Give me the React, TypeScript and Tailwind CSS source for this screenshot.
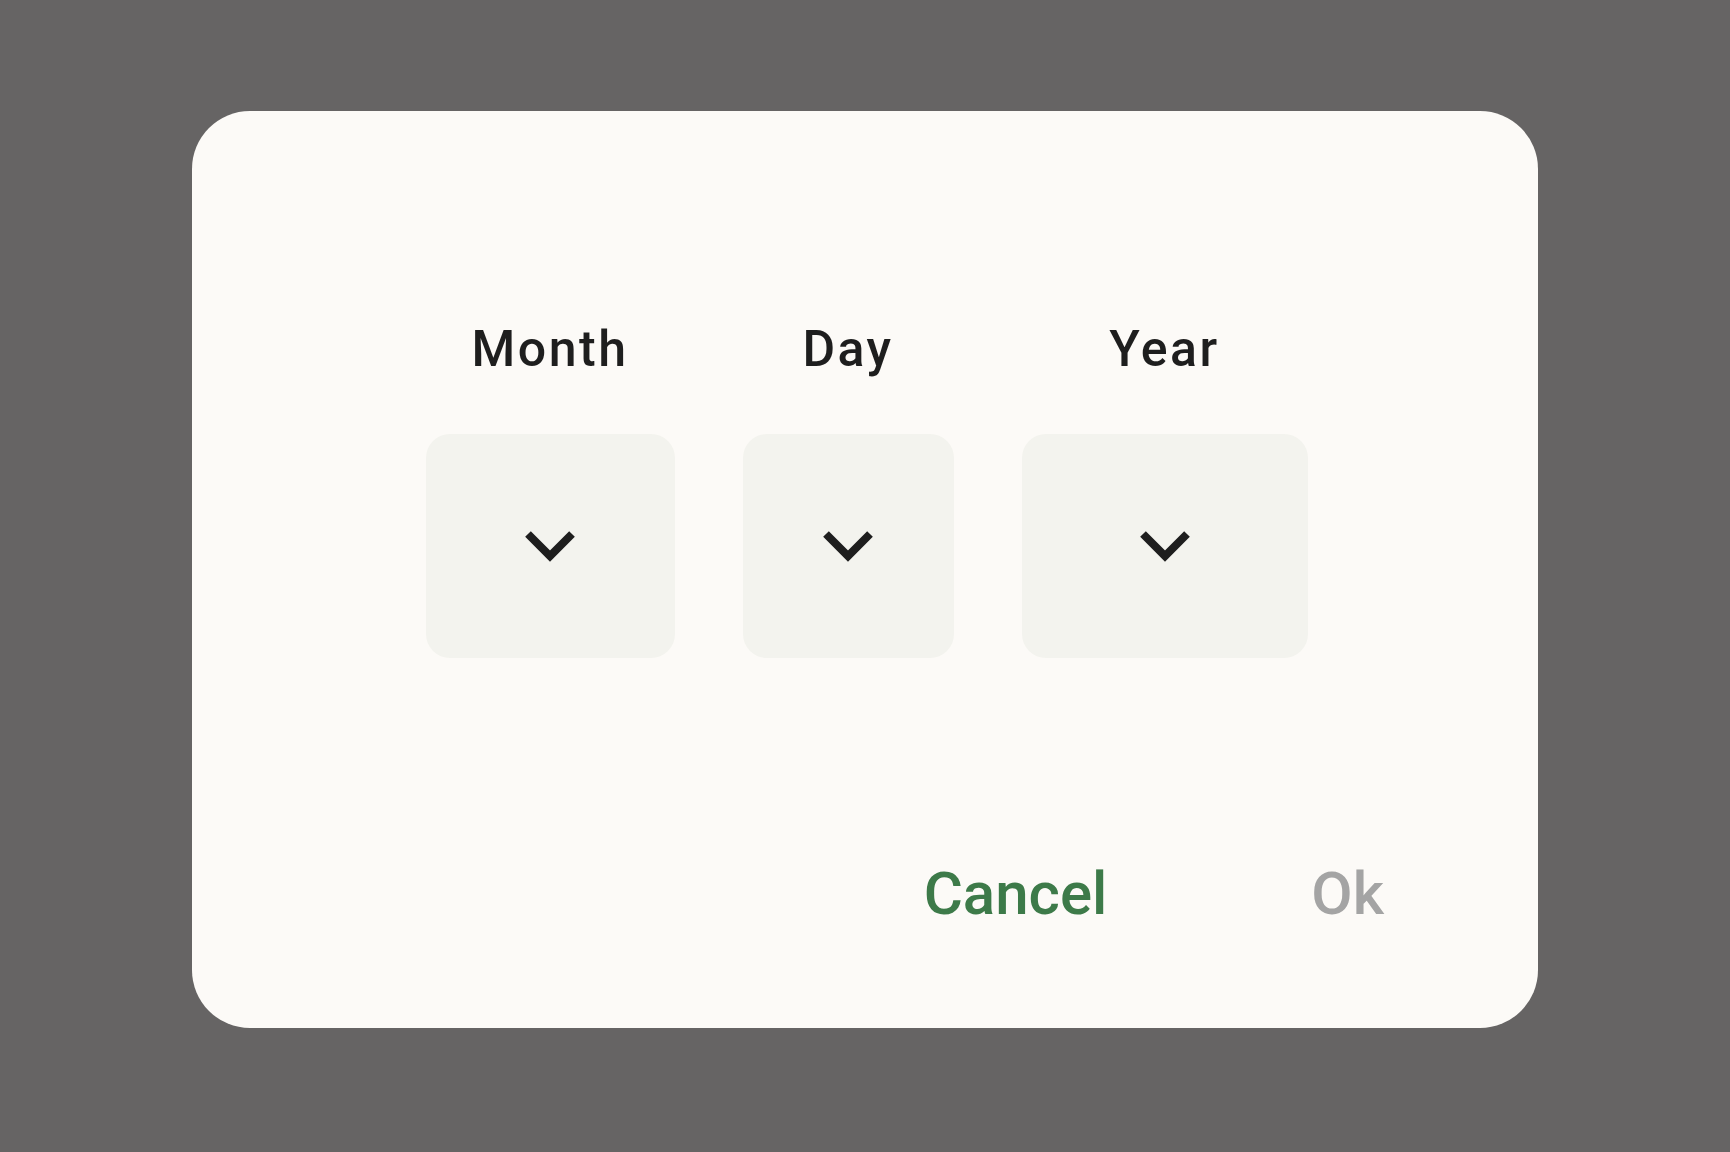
import React from "react";

function Chevron() {
  return (
    <svg width="52" height="36" viewBox="0 0 52 36" fill="none">
      <polyline points="4,6 26,28 48,6" stroke="#1e1e1e" strokeWidth="8" strokeLinejoin="miter" strokeLinecap="butt" />
    </svg>
  );
}

function Field({ label, width }: { label: string; width: string }) {
  return (
    <div className={`flex flex-col items-center ${width}`}>
      <div className="text-[50px] leading-none font-medium tracking-[0.05em] text-[#1e1e1e]">{label}</div>
      <div className="mt-[60px] flex h-[224px] w-full items-center justify-center rounded-[24px] bg-[#f3f3ee]">
        <Chevron />
      </div>
    </div>
  );
}

export default function App() {
  return (
    <div
      className="flex h-[1152px] w-[1730px] justify-center bg-[#666464] pt-[111px]"
      style={{ fontFamily: "Roboto, 'Noto Sans', sans-serif" }}
    >
      <div className="flex h-[917px] w-[1346px] flex-col rounded-[58px] bg-[#fcfaf7] pt-[213px]">
        <div className="flex justify-center gap-[68px] pl-[3px]">
          <Field label="Month" width="w-[249px]" />
          <Field label="Day" width="w-[211px]" />
          <Field label="Year" width="w-[286px]" />
        </div>
        <div className="mt-[206px] flex justify-end gap-[204px] pr-[154px] text-[60px] leading-none font-medium">
          <button className="text-[#3d7a49]">Cancel</button>
          <button className="text-[#a4a4a4]">Ok</button>
        </div>
      </div>
    </div>
  );
}
